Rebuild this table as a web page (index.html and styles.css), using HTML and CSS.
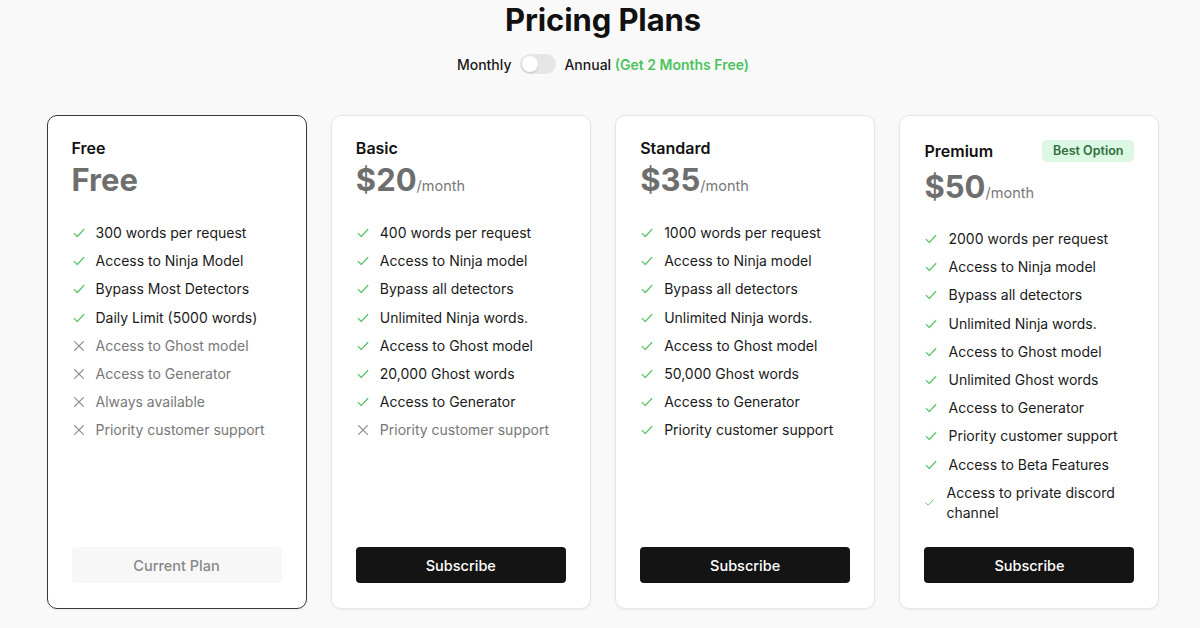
FILE: index.html
```html
<!DOCTYPE html>
<html lang="en">
<head>
<meta charset="utf-8">
<title>Pricing Plans</title>
<link rel="stylesheet" href="styles.css">
</head>
<body>
<main class="page">
  <h1 class="title">Pricing Plans</h1>
  <div class="billing">
    <span class="billing-label">Monthly</span>
    <span class="switch"><span class="knob"></span></span>
    <span class="billing-label">Annual <span class="free-note">(Get 2 Months Free)</span></span>
  </div>

  <section class="plans">
    <article class="card card-current">
      <header class="card-head"><h2 class="plan-name">Free</h2></header>
      <div class="price"><span class="amount">Free</span></div>
      <ul class="features">
        <li class="yes"><svg class="ico" viewBox="0 0 16 16"><path d="M2.5 8.5l3.5 3.5 7.5-8"/></svg><span>300 words per request</span></li>
        <li class="yes"><svg class="ico" viewBox="0 0 16 16"><path d="M2.5 8.5l3.5 3.5 7.5-8"/></svg><span>Access to Ninja Model</span></li>
        <li class="yes"><svg class="ico" viewBox="0 0 16 16"><path d="M2.5 8.5l3.5 3.5 7.5-8"/></svg><span>Bypass Most Detectors</span></li>
        <li class="yes"><svg class="ico" viewBox="0 0 16 16"><path d="M2.5 8.5l3.5 3.5 7.5-8"/></svg><span>Daily Limit (5000 words)</span></li>
        <li class="no"><svg class="ico" viewBox="0 0 16 16"><path d="M3 3l10 10M13 3L3 13"/></svg><span>Access to Ghost model</span></li>
        <li class="no"><svg class="ico" viewBox="0 0 16 16"><path d="M3 3l10 10M13 3L3 13"/></svg><span>Access to Generator</span></li>
        <li class="no"><svg class="ico" viewBox="0 0 16 16"><path d="M3 3l10 10M13 3L3 13"/></svg><span>Always available</span></li>
        <li class="no"><svg class="ico" viewBox="0 0 16 16"><path d="M3 3l10 10M13 3L3 13"/></svg><span>Priority customer support</span></li>
      </ul>
      <button class="btn btn-current" type="button">Current Plan</button>
    </article>

    <article class="card">
      <header class="card-head"><h2 class="plan-name">Basic</h2></header>
      <div class="price"><span class="amount">$20</span><span class="per">/month</span></div>
      <ul class="features">
        <li class="yes"><svg class="ico" viewBox="0 0 16 16"><path d="M2.5 8.5l3.5 3.5 7.5-8"/></svg><span>400 words per request</span></li>
        <li class="yes"><svg class="ico" viewBox="0 0 16 16"><path d="M2.5 8.5l3.5 3.5 7.5-8"/></svg><span>Access to Ninja model</span></li>
        <li class="yes"><svg class="ico" viewBox="0 0 16 16"><path d="M2.5 8.5l3.5 3.5 7.5-8"/></svg><span>Bypass all detectors</span></li>
        <li class="yes"><svg class="ico" viewBox="0 0 16 16"><path d="M2.5 8.5l3.5 3.5 7.5-8"/></svg><span>Unlimited Ninja words.</span></li>
        <li class="yes"><svg class="ico" viewBox="0 0 16 16"><path d="M2.5 8.5l3.5 3.5 7.5-8"/></svg><span>Access to Ghost model</span></li>
        <li class="yes"><svg class="ico" viewBox="0 0 16 16"><path d="M2.5 8.5l3.5 3.5 7.5-8"/></svg><span>20,000 Ghost words</span></li>
        <li class="yes"><svg class="ico" viewBox="0 0 16 16"><path d="M2.5 8.5l3.5 3.5 7.5-8"/></svg><span>Access to Generator</span></li>
        <li class="no"><svg class="ico" viewBox="0 0 16 16"><path d="M3 3l10 10M13 3L3 13"/></svg><span>Priority customer support</span></li>
      </ul>
      <button class="btn" type="button">Subscribe</button>
    </article>

    <article class="card">
      <header class="card-head"><h2 class="plan-name">Standard</h2></header>
      <div class="price"><span class="amount">$35</span><span class="per">/month</span></div>
      <ul class="features">
        <li class="yes"><svg class="ico" viewBox="0 0 16 16"><path d="M2.5 8.5l3.5 3.5 7.5-8"/></svg><span>1000 words per request</span></li>
        <li class="yes"><svg class="ico" viewBox="0 0 16 16"><path d="M2.5 8.5l3.5 3.5 7.5-8"/></svg><span>Access to Ninja model</span></li>
        <li class="yes"><svg class="ico" viewBox="0 0 16 16"><path d="M2.5 8.5l3.5 3.5 7.5-8"/></svg><span>Bypass all detectors</span></li>
        <li class="yes"><svg class="ico" viewBox="0 0 16 16"><path d="M2.5 8.5l3.5 3.5 7.5-8"/></svg><span>Unlimited Ninja words.</span></li>
        <li class="yes"><svg class="ico" viewBox="0 0 16 16"><path d="M2.5 8.5l3.5 3.5 7.5-8"/></svg><span>Access to Ghost model</span></li>
        <li class="yes"><svg class="ico" viewBox="0 0 16 16"><path d="M2.5 8.5l3.5 3.5 7.5-8"/></svg><span>50,000 Ghost words</span></li>
        <li class="yes"><svg class="ico" viewBox="0 0 16 16"><path d="M2.5 8.5l3.5 3.5 7.5-8"/></svg><span>Access to Generator</span></li>
        <li class="yes"><svg class="ico" viewBox="0 0 16 16"><path d="M2.5 8.5l3.5 3.5 7.5-8"/></svg><span>Priority customer support</span></li>
      </ul>
      <button class="btn" type="button">Subscribe</button>
    </article>

    <article class="card card-premium">
      <header class="card-head"><h2 class="plan-name">Premium</h2><span class="badge">Best Option</span></header>
      <div class="price"><span class="amount">$50</span><span class="per">/month</span></div>
      <ul class="features">
        <li class="yes"><svg class="ico" viewBox="0 0 16 16"><path d="M2.5 8.5l3.5 3.5 7.5-8"/></svg><span>2000 words per request</span></li>
        <li class="yes"><svg class="ico" viewBox="0 0 16 16"><path d="M2.5 8.5l3.5 3.5 7.5-8"/></svg><span>Access to Ninja model</span></li>
        <li class="yes"><svg class="ico" viewBox="0 0 16 16"><path d="M2.5 8.5l3.5 3.5 7.5-8"/></svg><span>Bypass all detectors</span></li>
        <li class="yes"><svg class="ico" viewBox="0 0 16 16"><path d="M2.5 8.5l3.5 3.5 7.5-8"/></svg><span>Unlimited Ninja words.</span></li>
        <li class="yes"><svg class="ico" viewBox="0 0 16 16"><path d="M2.5 8.5l3.5 3.5 7.5-8"/></svg><span>Access to Ghost model</span></li>
        <li class="yes"><svg class="ico" viewBox="0 0 16 16"><path d="M2.5 8.5l3.5 3.5 7.5-8"/></svg><span>Unlimited Ghost words</span></li>
        <li class="yes"><svg class="ico" viewBox="0 0 16 16"><path d="M2.5 8.5l3.5 3.5 7.5-8"/></svg><span>Access to Generator</span></li>
        <li class="yes"><svg class="ico" viewBox="0 0 16 16"><path d="M2.5 8.5l3.5 3.5 7.5-8"/></svg><span>Priority customer support</span></li>
        <li class="yes"><svg class="ico" viewBox="0 0 16 16"><path d="M2.5 8.5l3.5 3.5 7.5-8"/></svg><span>Access to Beta Features</span></li>
        <li class="yes wrap"><svg class="ico ico-small" viewBox="0 0 16 16"><path d="M2.5 8.5l3.5 3.5 7.5-8"/></svg><span>Access to private discord channel</span></li>
      </ul>
      <button class="btn" type="button">Subscribe</button>
    </article>
  </section>
</main>
</body>
</html>
```

FILE: styles.css
```css
* { box-sizing: border-box; }

html, body {
  margin: 0;
  padding: 0;
  background: #f9f9f9;
}

body {
  font-family: Inter, "Noto Sans", "Liberation Sans", sans-serif;
  color: #1a1a1a;
  width: 1200px;
  height: 628px;
  overflow: hidden;
}

.page {
  display: flex;
  flex-direction: column;
  align-items: center;
  padding-left: 6px;
}

.title {
  margin: 0;
  font-size: 31px;
  line-height: 40px;
  font-weight: 700;
  letter-spacing: -0.1px;
  color: #111;
}

.billing {
  display: flex;
  align-items: center;
  gap: 8.5px;
  margin-top: 14px;
  height: 20px;
  font-size: 14px;
  font-weight: 500;
  color: #1a1a1a;
}

.free-note {
  color: #4cc35d;
  font-weight: 600;
}

.switch {
  width: 36px;
  height: 20px;
  border-radius: 10px;
  background: #e6e6e6;
  padding: 2px;
  display: flex;
}

.knob {
  width: 16px;
  height: 16px;
  border-radius: 50%;
  background: #fff;
  box-shadow: 0 1px 2px rgba(0,0,0,0.15);
}

.plans {
  display: grid;
  grid-template-columns: repeat(4, 260px);
  gap: 24.33px;
  margin-top: 41px;
  width: 1113px;
  height: 494px;
}

.card {
  background: #fff;
  border: 1px solid #e6e6e6;
  border-radius: 10px;
  box-shadow: 0 1px 3px rgba(0,0,0,0.06);
  padding: 21px 24px 25px 24px;
  display: flex;
  flex-direction: column;
}

.card-current {
  border: 1.5px solid #3a3a3a;
}

.card-head {
  display: flex;
  align-items: center;
  justify-content: space-between;
  min-height: 22px;
}

.plan-name {
  margin: 0;
  font-size: 16px;
  line-height: 22px;
  font-weight: 600;
  color: #111;
}

.badge {
  background: #dcf7e2;
  color: #2f6e3d;
  font-size: 12.5px;
  font-weight: 600;
  line-height: 22px;
  padding: 0 11px;
  border-radius: 5px;
}

.card-premium .card-head {
  margin-top: 3px;
}

.card-premium .price {
  margin-top: 7px;
}

.card-premium .features {
  margin-top: 24px;
}

.price {
  display: flex;
  align-items: baseline;
  margin-top: 3px;
  height: 36px;
}

.amount {
  font-size: 31px;
  line-height: 36px;
  font-weight: 700;
  color: #6e6e6e;
}

.per {
  font-size: 14.5px;
  color: #777;
  margin-left: 0;
}

.features {
  list-style: none;
  margin: 25px 0 0 0;
  padding: 0;
  display: flex;
  flex-direction: column;
  gap: 8.2px;
}

.features li {
  display: flex;
  align-items: center;
  gap: 10px;
  font-size: 14px;
  line-height: 20px;
}

.features li.yes { color: #1a1a1a; }
.features li.no { color: #777; }

.ico {
  width: 14px;
  height: 14px;
  flex: none;
  fill: none;
  stroke-width: 1.4;
  stroke-linecap: round;
  stroke-linejoin: round;
}

.yes .ico { stroke: #5cc46b; }
.no .ico { stroke: #8a8a8a; }

.ico-small {
  width: 11px;
  height: 11px;
  margin-right: 1px;
}

.btn {
  margin-top: auto;
  height: 36px;
  width: 100%;
  border: none;
  border-radius: 4px;
  background: #141414;
  color: #fff;
  font-family: inherit;
  font-size: 14.5px;
  font-weight: 500;
}

.btn-current {
  background: #f7f7f7;
  color: #888;
}
```
